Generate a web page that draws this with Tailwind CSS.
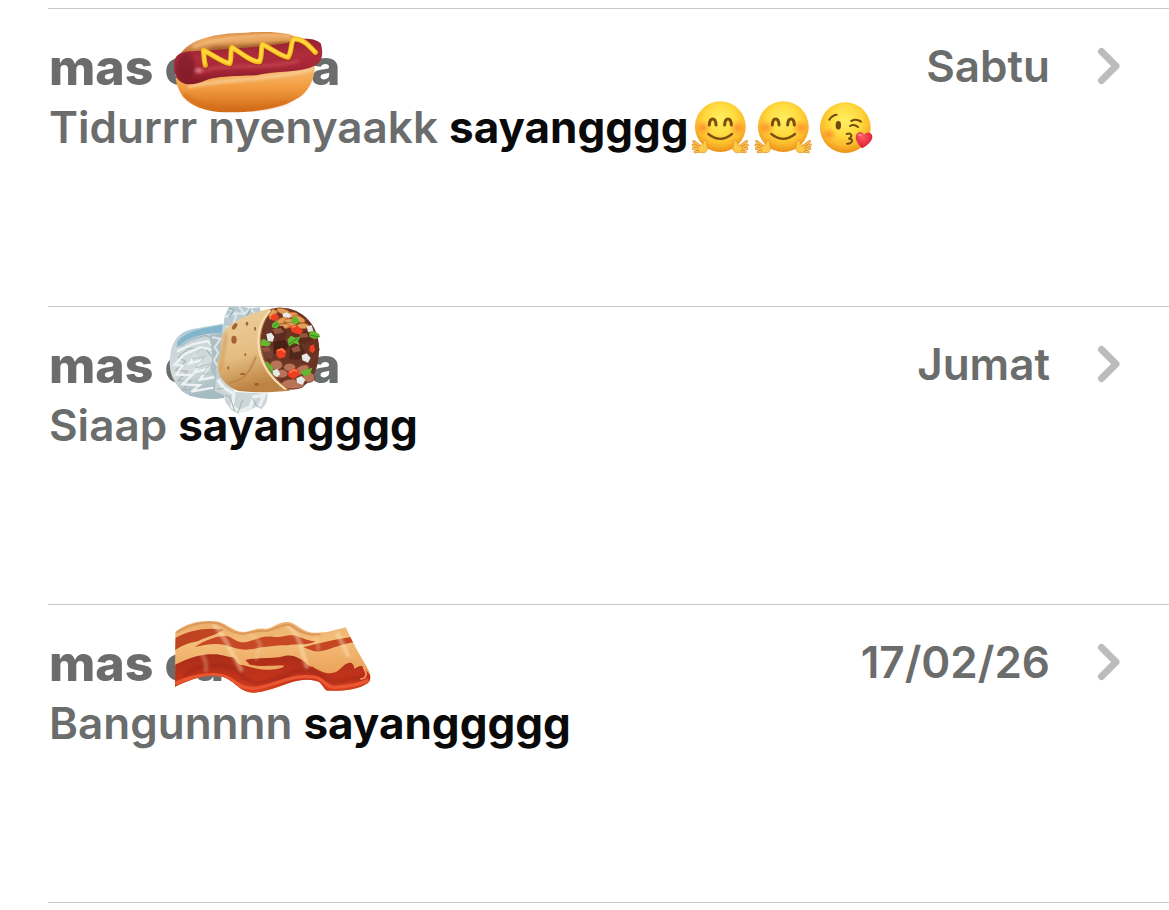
<!DOCTYPE html>
<html lang="id">
<head>
<meta charset="utf-8">
<meta name="viewport" content="width=device-width, initial-scale=1">
<title>Pesan</title>
<script src="https://cdn.jsdelivr.net/npm/@tailwindcss/browser@4"></script>
</head>
<body class="bg-white font-['Inter',sans-serif] text-[#6b6c6c]">

<svg class="absolute size-0" aria-hidden="true">
  <defs>
    <filter id="hair" x="-10%" y="-10%" width="120%" height="120%"><feGaussianBlur stdDeviation="1.6"/></filter>
    <filter id="soft" x="-20%" y="-20%" width="140%" height="140%"><feGaussianBlur stdDeviation="4"/></filter>
    <radialGradient id="face" cx=".5" cy=".36" r=".66">
      <stop offset="0" stop-color="#ffee62"/><stop offset=".45" stop-color="#ffdc3f"/><stop offset=".75" stop-color="#fbb92b"/><stop offset="1" stop-color="#e88a14"/>
    </radialGradient>
    <radialGradient id="blush"><stop offset="0" stop-color="#ff7228" stop-opacity=".65"/><stop offset="1" stop-color="#ff8a35" stop-opacity="0"/></radialGradient>
    <linearGradient id="bun" x1="0" y1="0" x2="0" y2="1"><stop offset="0" stop-color="#f6bd76"/><stop offset=".45" stop-color="#f39c40"/><stop offset="1" stop-color="#d06a18"/></linearGradient>
    <linearGradient id="bunback" x1="0" y1="0" x2="0" y2="1"><stop offset="0" stop-color="#d98a40"/><stop offset=".3" stop-color="#e9a660"/><stop offset="1" stop-color="#a85a28"/></linearGradient>
    <linearGradient id="sausage" x1="0" y1="0" x2=".12" y2="1"><stop offset="0" stop-color="#8c1f2b"/><stop offset=".45" stop-color="#b02c3b"/><stop offset=".75" stop-color="#a32535"/><stop offset="1" stop-color="#7b1824"/></linearGradient>
    <linearGradient id="foil" x1="0" y1="0" x2=".3" y2="1"><stop offset="0" stop-color="#82bcd6"/><stop offset=".25" stop-color="#c6d4d8"/><stop offset=".65" stop-color="#d5dddd"/><stop offset="1" stop-color="#a5bbc2"/></linearGradient>
    <linearGradient id="tortilla" x1="0" y1="0" x2=".25" y2="1"><stop offset="0" stop-color="#ecd0a0"/><stop offset=".6" stop-color="#e5bd82"/><stop offset="1" stop-color="#bd8344"/></linearGradient>
    <linearGradient id="bacon" x1="0" y1="0" x2=".1" y2="1"><stop offset="0" stop-color="#e9a968"/><stop offset=".35" stop-color="#f3bd78"/><stop offset="1" stop-color="#e8954b"/></linearGradient>
    <linearGradient id="meat" x1="0" y1="0" x2="0" y2="1"><stop offset="0" stop-color="#a92d18"/><stop offset=".6" stop-color="#c5341b"/><stop offset="1" stop-color="#dc4a26"/></linearGradient>
    <radialGradient id="heart" cx=".4" cy=".3" r=".7"><stop offset="0" stop-color="#ff5a62"/><stop offset="1" stop-color="#d91c33"/></radialGradient>

    <g id="hand" stroke-linecap="round" stroke-linejoin="round" fill="none">
      <g stroke="#d98420" stroke-width="8">
        <path d="M34 168 14 153M30 172 12 164M31 177 13 175M35 182 18 185M44 172 48 154"/>
      </g>
      <g stroke="#fbc34e" stroke-width="5">
        <path d="M34 168 14 153M30 172 12 164M31 177 13 175M35 182 18 185"/>
      </g>
      <path d="M28 168C34 167 40 166 42 158C44 148 52 145 53 155C53 165 58 172 54 180C49 190 36 189 29 183Z" fill="#fdc947" stroke="#df8f22" stroke-width="2"/>
    </g>
    <symbol id="hug" viewBox="0 20 189 174">
      <circle cx="94" cy="109" r="76" fill="url(#face)"/>
      <ellipse cx="42" cy="112" rx="28" ry="24" fill="url(#blush)"/>
      <ellipse cx="146" cy="112" rx="28" ry="24" fill="url(#blush)"/>
      <g fill="none" stroke="#7b4f10" stroke-linecap="round" stroke-width="9">
        <path d="M61 104C62 80 80 80 81 104M107 104C108 80 126 80 127 104"/>
        <path d="M58 131Q94 160 129 131" stroke-width="7"/>
      </g>
      <use href="#hand"/>
      <use href="#hand" transform="matrix(-1 0 0 1 187 0)"/>
    </symbol>
    <symbol id="kiss" viewBox="378 20 189 174">
      <circle cx="469" cy="112" r="76" fill="url(#face)"/>
      <ellipse cx="420" cy="132" rx="24" ry="20" fill="url(#blush)"/>
      <g fill="none" stroke="#734b12" stroke-linecap="round" stroke-linejoin="round">
        <path d="M421 88Q428 75 443 73" stroke-width="6"/>
        <path d="M487 92Q502 84 516 94" stroke-width="6"/>
        <path d="M483 107Q495 100 507 110" stroke-width="6"/>
        <path d="M473 131C486 127 494 136 480 145C495 145 491 161 474 160" stroke-width="6"/>
      </g>
      <ellipse cx="448" cy="105" rx="8" ry="13" fill="#70480f"/>
      <path d="M519 174C504 158 497 145 502 133C508 121 521 123 525 133C533 122 547 125 550 137C551 153 535 165 519 174Z" fill="url(#heart)"/>
      <ellipse cx="513" cy="134" rx="6" ry="4" fill="#ff9c9f" opacity=".7"/>
    </symbol>
    <symbol id="chevron" viewBox="0 0 24 40">
      <path d="M4.500 4.500 19 19 4.500 33.500" fill="none" stroke="#bcbcbc" stroke-width="7" stroke-linecap="round" stroke-linejoin="round"/>
    </symbol>
  </defs>
</svg>

<main class="pt-2">
  <ul class="ml-12">

    <li class="relative h-[298px] border-t border-[#c8c8c8]">
      <a href="#" class="block pt-7 pl-px">
        <div class="flex h-[60px] items-start pr-12">
          <h2 class="flex flex-1 text-[50px] leading-[60px] font-extrabold"><span class="w-[262px]">mas c</span><span>a</span></h2>
          <time class="text-[44px] leading-[58px] font-[560]">Sabtu</time>
          <svg class="mt-[10px] ml-[47px] h-10 w-6"><use href="#chevron"/></svg>
        </div>
        <p class="flex h-[60px] text-[44px] leading-[60px] font-[560]"><span class="whitespace-pre">Tidurrr nyenyaakk <b class="font-bold text-[#0a0a0a]">sayangggg</b></span><svg class="h-[58px] w-[63px]" role="img" aria-label="peluk"><use href="#hug"/></svg><svg class="h-[58px] w-[63px]" role="img" aria-label="peluk"><use href="#hug"/></svg><svg class="h-[58px] w-[63px]" role="img" aria-label="cium"><use href="#kiss"/></svg></p>
      </a>
      <svg class="pointer-events-none absolute top-[19px] left-[122px] h-[87px] w-[155px]" viewBox="390 24 465 261" role="img" aria-label="hot dog">
        <path d="M421 102C448 59 520 39 618 38C697 32 754 38 774 56L795 92 460 120Z" fill="url(#bunback)"/>
        <path d="M459 81C530 53 650 43 750 47" fill="none" stroke="#f4bd7c" stroke-width="9" filter="url(#soft)"/>
        <path d="M499 91Q510 76 560 78C620 75 690 68 751 63L742 88 520 108Z" fill="#a4652f" filter="url(#soft)"/>
        <path d="M407 175C415 226 445 266 535 276C632 281 724 266 768 238C805 220 825 176 824 139L500 165Z" fill="url(#bun)"/>
        <path d="M430 222C485 275 640 279 745 244" fill="none" stroke="#d46a14" stroke-width="13" opacity=".5" filter="url(#soft)"/>
        <path d="M444 201C520 179 709 180 817 147" fill="none" stroke="#f8cf96" stroke-width="9" filter="url(#soft)"/>
        <path d="M402 143C400 107 417 95 453 94C560 87 640 84 743 69C767 53 822 50 842 70C851 99 848 126 823 138C779 160 711 151 649 166C568 169 528 170 498 181C443 205 406 193 402 143Z" fill="url(#sausage)"/>
        <path d="M475 157C550 125 668 153 778 122" fill="none" stroke="#df5966" stroke-width="10" opacity=".5" filter="url(#soft)"/>
        <path d="M410 119Q437 88 457 110Q475 141 454 174Q421 184 409 155" fill="#681621" opacity=".5" filter="url(#soft)"/>
        <ellipse cx="475" cy="151" rx="11" ry="8" fill="#f6c4c8" opacity=".5" filter="url(#soft)"/>
        <path d="M497 140 492 122 490 93C516 104 544 128 569 133C576 119 570 91 576 84C602 100 637 131 659 127C667 111 662 86 667 75C691 85 720 111 744 114C757 98 750 73 761 59C787 56 807 79 826 99" fill="none" stroke="#8e351c" stroke-width="14" stroke-linecap="round" stroke-linejoin="round" opacity=".4" transform="translate(2 4)"/>
        <path d="M496 136 493 120 490 91C516 102 544 126 569 131C576 117 570 89 576 82C602 98 637 129 659 125C667 109 662 84 667 73C691 83 720 109 744 112C757 96 750 71 761 57C787 54 807 77 826 97" fill="none" stroke="#f5b51d" stroke-width="15" stroke-linecap="round" stroke-linejoin="round"/>
        <path d="M494 130 491 92C516 101 544 125 568 129C576 115 570 87 577 82C602 98 637 127 658 123C667 107 662 82 668 73C691 83 720 107 743 110C757 94 751 71 762 57C787 56 807 77 825 95" fill="none" stroke="#ffd73a" stroke-width="9" stroke-linecap="round" stroke-linejoin="round"/>
      </svg>
    </li>

    <li class="relative h-[298px] border-t border-[#c8c8c8]">
      <a href="#" class="block pt-7 pl-px">
        <div class="flex h-[60px] items-start pr-12">
          <h2 class="flex flex-1 text-[50px] leading-[60px] font-extrabold"><span class="w-[262px]">mas c</span><span>a</span></h2>
          <time class="text-[44px] leading-[58px] font-[560]">Jumat</time>
          <svg class="mt-[10px] ml-[47px] h-10 w-6"><use href="#chevron"/></svg>
        </div>
        <p class="h-[60px] text-[44px] leading-[60px] font-[560]">Siaap <b class="font-bold text-[#0a0a0a]">sayangggg</b></p>
      </a>
      <svg class="pointer-events-none absolute -top-[3px] left-[117px] h-[113px] w-[160px]" viewBox="45 12 480 339" role="img" aria-label="burrito">
        <path d="M220 78 224 49 236 22 267 18 301 25 329 22 335 47 290 85Z" fill="#b9cbd1"/>
        <g filter="url(#hair)">
          <path d="M236 25 260 40 251 70M267 19 283 42 301 25 319 48M224 51 260 40 283 42" fill="none" stroke="#dde7e9" stroke-width="6"/>
          <path d="M236 24 252 31 238 52M301 27 291 49" fill="none" stroke="#8faeb9" stroke-width="4"/>
        </g>
        <path d="M61 165C65 126 84 98 125 88L216 71 246 91 220 260 223 294C170 302 111 293 91 268C62 235 55 202 61 165Z" fill="url(#foil)"/>
        <path d="M82 126C105 92 165 83 218 74L216 98C158 100 122 108 80 143Z" fill="#72aecb" opacity=".8"/>
        <g filter="url(#hair)">
          <path d="M90 139 121 120 166 106 207 126 180 130 195 181 167 147 116 145 85 172 107 184 77 211 112 214 84 242 123 242 97 270 145 267 122 286 183 278 161 291" fill="none" stroke="#aab9bd" stroke-width="4"/>
          <path d="M81 154 126 133 173 123 196 151 151 142 103 163 74 194 97 197 79 224 126 225 98 253 149 256 124 275 190 263M140 160 118 190 154 181 133 217 172 207 150 239 196 231" fill="none" stroke="#eef2f2" stroke-width="7"/>
          <path d="M147 151 127 177 165 169 136 204 182 190 158 223 203 215" fill="none" stroke="#b3c0c3" stroke-width="3"/>
          <path d="M178 105 217 96 223 139 196 214 203 252 181 205 188 169Z" fill="#aebfc4"/>
          <path d="M186 112 212 116 194 142 205 158 192 181 202 197" fill="none" stroke="#dce4e5" stroke-width="6"/>
        </g>
        <path d="M200 230 226 237 255 276 354 281 349 309 335 328 319 320 299 330 264 341 244 330 226 306 222 286 194 273Z" fill="#ccd6d8"/>
        <g filter="url(#hair)">
          <path d="M204 240 222 264 252 281 246 320 270 334 300 322 312 290 342 286 328 318" fill="none" stroke="#edf1f1" stroke-width="10" stroke-linejoin="round"/>
          <path d="M224 285 240 291 254 333M278 300 264 337M308 294 320 319M200 267 221 266" fill="none" stroke="#9fb1b7" stroke-width="3"/>
        </g>
        <path d="M358 28C328 78 321 151 351 207L401 267C470 278 506 229 507 151C511 74 450 13 373 25Z" fill="#6a3424"/>
        <g fill="#b87457" stroke="#7b402d" stroke-width="3">
          <ellipse cx="379" cy="195" rx="19" ry="15"/><ellipse cx="455" cy="210" rx="24" ry="13" transform="rotate(-28 455 210)"/><ellipse cx="393" cy="221" rx="21" ry="13"/><ellipse cx="476" cy="232" rx="18" ry="15"/><ellipse cx="429" cy="252" rx="35" ry="15"/><ellipse cx="419" cy="202" rx="18" ry="12"/>
        </g>
        <g fill="#e1a15b" stroke="#c66a31" stroke-width="3">
          <path d="M354 39 368 27 382 34 377 50 360 58Z"/><ellipse cx="401" cy="35" rx="21" ry="8" transform="rotate(20 401 35)"/><ellipse cx="395" cy="62" rx="18" ry="8" transform="rotate(-25 395 62)"/><ellipse cx="426" cy="45" rx="18" ry="8"/><ellipse cx="447" cy="57" rx="19" ry="8" transform="rotate(25 447 57)"/><ellipse cx="427" cy="77" rx="19" ry="8" transform="rotate(30 427 77)"/><ellipse cx="458" cy="78" rx="17" ry="8"/><ellipse cx="403" cy="78" rx="15" ry="7"/><ellipse cx="418" cy="62" rx="16" ry="6"/>
        </g>
        <g>
          <path d="M364 83 398 77 411 95 402 124 369 120Z" fill="#5d2c20"/><path d="M328 143 358 134 372 152 366 177 333 173Z" fill="#744033"/><path d="M370 125 405 119 416 139 399 164 371 161Z" fill="#492016"/><path d="M420 141 449 129 465 155 448 179 417 176Z" fill="#51271b"/><path d="M440 95 479 91 487 118 463 134 444 124Z" fill="#5c2a1d"/><path d="M475 127 503 119 509 151 489 163Z" fill="#65301f"/>
          <path d="M366 88 392 84 402 97 375 103ZM334 145 353 140 363 153 342 156ZM423 145 446 136 453 152 431 158ZM447 101 470 98 476 111 452 114Z" fill="#94543d"/>
        </g>
        <g fill="#63b82d">
          <path d="M367 71 381 61 389 74 380 86 365 82ZM426 55 439 49 449 65 437 74 424 66ZM477 99 488 90 497 97 507 102 511 111 494 117 479 111ZM412 119 423 107 436 113 452 109 444 124 450 136 432 129 417 139ZM328 125 341 116 363 129 356 139 332 137ZM333 184 353 185 369 202 371 225 351 216ZM452 214 487 203 480 224 461 228Z"/>
        </g>
        <path d="M334 187 368 218M417 132 444 114M482 106 505 110M370 80 385 69" stroke="#2f8524" stroke-width="3"/>
        <g fill="#ee4021">
          <path d="M361 49 376 39 388 50 378 64 365 60ZM420 77 440 75 460 93 449 104 425 95ZM378 151 397 143 409 153 405 171 389 176 379 166ZM480 137 491 133 496 151 488 160 478 152ZM414 216 430 205 447 211 446 227 430 237 415 229Z"/>
        </g>
        <path d="M382 151 396 147 403 156M419 218 430 209 441 214M426 81 438 79" fill="none" stroke="#ff8b54" stroke-width="4"/>
        <g fill="#e7e8e8">
          <path d="M349 102 364 98 373 111 368 125 353 123ZM397 42 411 37 424 46 418 54 400 51ZM470 78 485 76 490 92 474 97ZM455 166 470 160 482 174 474 188 457 181ZM368 212 382 206 391 222 381 232 370 225ZM439 235 455 228 466 240 457 254 442 249Z"/>
        </g>
        <path d="M360 26C306 35 245 65 224 91C208 120 218 154 203 193C202 236 237 264 267 273C319 280 376 276 420 272C341 224 298 124 362 30Z" fill="url(#tortilla)"/>
        <path d="M361 32C303 92 313 201 408 268" fill="none" stroke="#f8ddb0" stroke-width="7"/>
        <path d="M366 32C309 92 318 201 418 270" fill="none" stroke="#af743d" stroke-width="3"/>
        <path d="M318 169C300 218 280 244 236 248" fill="none" stroke="#b78043" stroke-width="6" opacity=".7" filter="url(#hair)"/>
        <path d="M228 100C226 139 215 175 211 211" fill="none" stroke="#c68f50" stroke-width="11" opacity=".5" filter="url(#soft)"/>
        <g fill="#975326" opacity=".85" filter="url(#hair)">
          <ellipse cx="254" cy="79" rx="11" ry="6" transform="rotate(-55 254 79)"/><ellipse cx="252" cy="119" rx="8" ry="12"/><ellipse cx="291" cy="71" rx="4" ry="6"/><ellipse cx="278" cy="222" rx="8" ry="3"/><ellipse cx="320" cy="253" rx="7" ry="4"/><ellipse cx="235" cy="204" rx="3" ry="5"/><ellipse cx="315" cy="86" rx="3" ry="6"/><ellipse cx="286" cy="164" rx="3" ry="4"/>
        </g>
      </svg>
    </li>

    <li class="relative h-[299px] border-y border-[#c8c8c8]">
      <a href="#" class="block pt-7 pl-px">
        <div class="flex h-[60px] items-start pr-12">
          <h2 class="flex-1 text-[50px] leading-[60px] font-extrabold">mas ca</h2>
          <time class="text-[44px] leading-[58px] font-[560]">17/02/26</time>
          <svg class="mt-[10px] ml-[47px] h-10 w-6"><use href="#chevron"/></svg>
        </div>
        <p class="h-[60px] text-[44px] leading-[60px] font-[560]">Bangunnnn <b class="font-bold text-[#0a0a0a]">sayanggggg</b></p>
      </a>
      <svg class="pointer-events-none absolute top-[13px] left-[124px] h-[78px] w-[201px]" viewBox="396 9 603 234" role="img" aria-label="bacon">
        <defs><clipPath id="strip"><path d="M406 51C440 20 499 14 536 20C562 28 579 48 609 51C630 50 649 37 675 42C705 38 719 15 750 22C776 31 790 51 817 53C852 56 887 45 917 37C934 72 952 110 974 145C985 163 1001 188 983 205C951 226 900 229 862 227C850 225 847 201 829 198C764 181 713 228 643 233C596 235 583 190 539 184C493 176 445 196 405 215Z"/></clipPath></defs>
        <g clip-path="url(#strip)">
          <rect x="396" y="9" width="603" height="234" fill="url(#bacon)"/>
          <path d="M406 69C453 43 503 37 550 44C526 61 493 67 473 79C444 84 421 94 405 106Z" fill="#bf4522"/>
          <path d="M464 96C492 76 528 64 556 62C581 66 591 87 620 81C651 73 667 60 704 66C732 67 742 57 768 62C791 70 805 78 827 78C805 92 770 86 742 91C705 91 682 96 655 98C613 111 589 101 557 91C526 82 493 90 464 96Z" fill="#c64825"/>
          <path d="M790 97C828 86 880 75 932 66L940 82C891 89 853 115 820 108Z" fill="#c64523"/>
          <path d="M402 151C442 130 475 120 512 118C543 115 562 127 577 126C591 131 588 150 608 150C633 156 660 166 690 164C716 162 730 158 732 152C706 151 658 156 630 149L616 135C645 128 685 131 718 127C742 120 756 120 773 128C798 137 803 157 818 155C840 169 858 177 875 174C900 173 906 148 926 144C937 139 944 153 942 161C950 160 957 150 967 154L1000 190 970 244 402 243Z" fill="url(#meat)"/>
          <path d="M432 183C476 147 545 143 583 162C606 178 616 200 648 205C707 202 747 172 785 164C827 160 854 196 878 201C912 202 935 182 974 190" fill="none" stroke="#8e2017" stroke-width="12" opacity=".4" filter="url(#soft)"/>
          <path d="M405 206C458 181 529 169 567 190C591 204 610 224 644 220C705 214 760 171 834 189C853 197 862 220 888 217C927 214 961 209 986 195" fill="none" stroke="#ea5630" stroke-width="10" filter="url(#hair)"/>
          <path d="M520 28Q542 47 572 106L606 169M740 29Q767 48 779 83L802 161M890 52Q913 96 926 126" fill="none" stroke="#ffebbf" stroke-width="12" opacity=".5" filter="url(#soft)"/>
          <path d="M410 53C457 22 518 15 547 31C575 53 592 56 609 57C640 52 652 45 680 48C710 43 731 22 753 31C787 57 812 61 842 58" fill="none" stroke="#dc9858" stroke-width="6" filter="url(#hair)"/>
          <path d="M627 63Q647 58 661 90L647 135M823 70Q835 77 835 107M484 115Q505 145 496 170" fill="none" stroke="#fbd6a0" stroke-width="11" opacity=".35" filter="url(#soft)"/>
          <path d="M970 156 979 176 975 188 961 193" fill="none" stroke="#ff986b" stroke-width="5" filter="url(#hair)"/>
        </g>
      </svg>
    </li>

  </ul>
</main>
</body>
</html>
